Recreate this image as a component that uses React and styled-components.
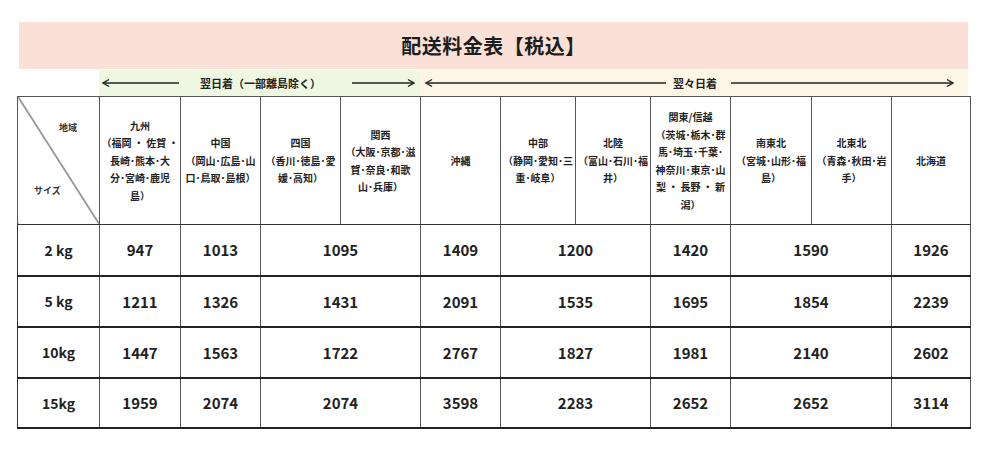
import React from 'react';
import styled, { createGlobalStyle } from 'styled-components';

const GlobalStyle = createGlobalStyle`
  body {
    margin: 0;
    background: #fff;
    font-family: "Noto Sans CJK JP", "Noto Sans", sans-serif;
    color: #222;
  }
`;

const colWidths = [82, 81, 80, 80, 80, 80, 75, 75, 80, 81, 80, 79];

const regions = [
  ['九州', '（福岡 ・ 佐賀 ・', '長崎･熊本･大', '分･宮崎･鹿児', '島）'],
  ['中国', '（岡山･広島･山', '口･鳥取･島根）'],
  ['四国', '（香川･徳島･愛', '媛･高知）'],
  ['関西', '（大阪･京都･滋', '賀･奈良･和歌', '山･兵庫）'],
  ['沖縄'],
  ['中部', '（静岡･愛知･三', '重･岐阜）'],
  ['北陸', '（富山･石川･福', '井）'],
  ['関東/信越', '（茨城･栃木･群', '馬･埼玉･千葉･', '神奈川･東京･山', '梨 ・ 長野 ・ 新', '潟）'],
  ['南東北', '（宮城･山形･福', '島）'],
  ['北東北', '（青森･秋田･岩', '手）'],
  ['北海道'],
];

// each row: [label, [value, colspan]...]
const rows = [
  ['2 kg', [['947', 1], ['1013', 1], ['1095', 2], ['1409', 1], ['1200', 2], ['1420', 1], ['1590', 2], ['1926', 1]]],
  ['5 kg', [['1211', 1], ['1326', 1], ['1431', 2], ['2091', 1], ['1535', 2], ['1695', 1], ['1854', 2], ['2239', 1]]],
  ['10kg', [['1447', 1], ['1563', 1], ['1722', 2], ['2767', 1], ['1827', 2], ['1981', 1], ['2140', 2], ['2602', 1]]],
  ['15kg', [['1959', 1], ['2074', 1], ['2074', 2], ['3598', 1], ['2283', 2], ['2652', 1], ['2652', 2], ['3114', 1]]],
];

const Arrow = ({ width, dir }) => (
  <svg width={width} height="10" viewBox={`0 0 ${width} 10`}>
    <line x1="1" y1="5" x2={width - 1} y2="5" stroke="#222" strokeWidth="1.4" />
    {dir === 'left' ? (
      <path d="M7 1.5 L1 5 L7 8.5" fill="none" stroke="#222" strokeWidth="1.4" />
    ) : (
      <path d={`M${width - 7} 1.5 L${width - 1} 5 L${width - 7} 8.5`} fill="none" stroke="#222" strokeWidth="1.4" />
    )}
  </svg>
);

const App = () => {
  return (
    <Page>
      <GlobalStyle />
      <TitleBand>配送料金表【税込】</TitleBand>
      <ArrowRow>
        <Spacer />
        <Band $bg="#eef7e2" $width={321} $pad={3}>
          <Arrow width={78} dir="left" />
          <BandText $ml={20} $mr={30}>翌日着（一部離島除く）</BandText>
          <Arrow width={64} dir="right" />
        </Band>
        <Band $bg="#fdf6e6" $width={548} $pad={5}>
          <Arrow width={242} dir="left" />
          <BandText $ml={6} $mr={13}>翌々日着</BandText>
          <Arrow width={224} dir="right" />
        </Band>
      </ArrowRow>
      <Table>
        <colgroup>
          {colWidths.map((w, i) => <col key={i} style={{ width: w }} />)}
        </colgroup>
        <thead>
          <tr>
            <CornerCell>
              <Corner>
                <CornerTop>地域</CornerTop>
                <CornerBottom>サイズ</CornerBottom>
              </Corner>
            </CornerCell>
            {regions.map((r, i) => (
              <HeadCell key={i}>
                {r.map((line, j) => <Line key={j}>{line}</Line>)}
              </HeadCell>
            ))}
          </tr>
        </thead>
        <tbody>
          {rows.map(([label, vals], i) => (
            <BodyRow key={i} $last={i === rows.length - 1}>
              <SizeCell>{label}</SizeCell>
              {vals.map(([v, span], j) => (
                <PriceCell key={j} colSpan={span}>{v}</PriceCell>
              ))}
            </BodyRow>
          ))}
        </tbody>
      </Table>
    </Page>
  );
};

const Page = styled.div`
  padding: 22px 0 0 17px;
  width: 967px;
`;

const TitleBand = styled.div`
  margin-left: 2px;
  width: 949px;
  height: 47px;
  background: #fae0d6;
  display: flex;
  align-items: center;
  justify-content: center;
  font-size: 20px;
  font-weight: 700;
  color: #1d1d1d;
  letter-spacing: 0.5px;
`;

const ArrowRow = styled.div`
  display: flex;
  height: 26px;
  margin-top: 1px;
`;

const Spacer = styled.div`
  width: 82px;
`;

const Band = styled.div`
  width: ${(p) => p.$width}px;
  background: ${(p) => p.$bg};
  padding-left: ${(p) => p.$pad}px;
  box-sizing: border-box;
  display: flex;
  align-items: center;
`;

const BandText = styled.span`
  font-size: 11px;
  font-weight: 700;
  margin: 0 ${(p) => p.$mr}px 0 ${(p) => p.$ml}px;
  white-space: nowrap;
  color: #222;
`;

const Table = styled.table`
  border-collapse: collapse;
  table-layout: fixed;
  width: 953px;
  border: 1.5px solid #333;
`;

const HeadCell = styled.th`
  height: 127px;
  padding: 0;
  border: 1px solid #555;
  border-bottom: 1.5px solid #333;
  text-align: center;
  vertical-align: middle;
  font-size: 10px;
  font-weight: 700;
  line-height: 17.5px;
  color: #222;
`;

const Line = styled.div`
  white-space: nowrap;
`;

const CornerCell = styled.th`
  height: 127px;
  padding: 0;
  border: 1px solid #555;
  border-bottom: 1.5px solid #333;
  background: linear-gradient(to top right, transparent calc(50% - 0.9px), #2a2a2a 50%, transparent calc(50% + 0.9px));
`;

const Corner = styled.div`
  height: 127px;
  display: flex;
  flex-direction: column;
  justify-content: space-between;
  padding: 24px 0 27px;
  box-sizing: border-box;
  font-size: 9px;
  font-weight: 700;
  color: #333;
`;

const CornerTop = styled.span`
  align-self: flex-end;
  margin-right: 22px;
`;

const CornerBottom = styled.span`
  align-self: flex-start;
  margin-left: 16px;
`;

const BodyRow = styled.tr`
  height: ${(p) => (p.$last ? 50 : 51)}px;
  border-bottom: 2px solid #222;
`;

const SizeCell = styled.td`
  padding: 0;
  border-left: 1.5px solid #333;
  border-right: 1px solid #555;
  text-align: center;
  font-size: 14px;
  font-weight: 700;
  color: #222;
`;

const PriceCell = styled.td`
  padding: 0;
  border-right: 1px solid #555;
  text-align: center;
  font-size: 15px;
  font-weight: 700;
  color: #222;
`;

export default App;
